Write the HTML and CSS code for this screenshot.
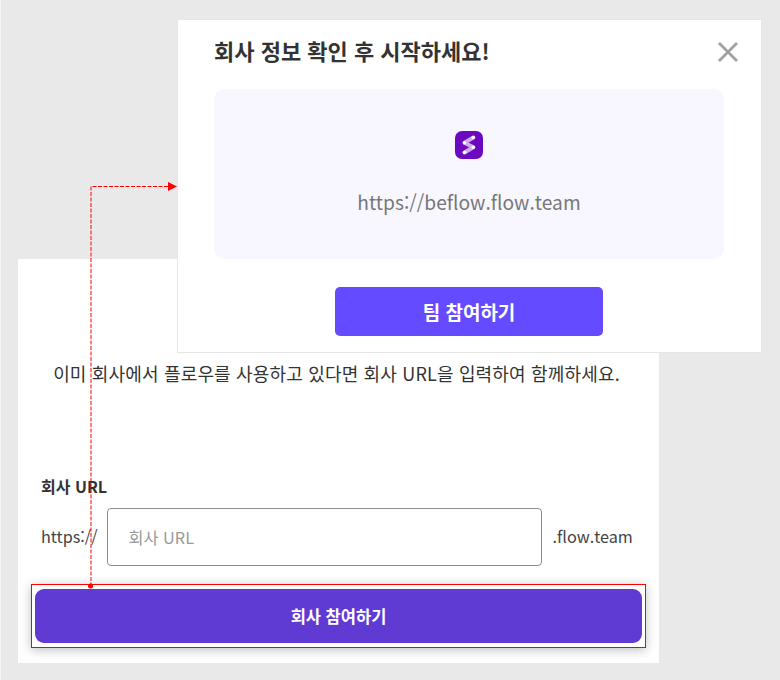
FILE: index.html
```html
<!DOCTYPE html>
<html lang="ko">
<head>
<meta charset="utf-8">
<title>회사 참여</title>
<link rel="stylesheet" href="styles.css">
</head>
<body>
<main class="card">
  <p class="desc">이미 회사에서 플로우를 사용하고 있다면 회사 URL을 입력하여 함께하세요.</p>
  <label class="label" for="url">회사 URL</label>
  <div class="url-row">
    <span class="affix">https://</span>
    <input class="input" id="url" placeholder="회사 URL">
    <span class="affix">.flow.team</span>
  </div>
  <div class="highlight"><button class="join">회사 참여하기</button></div>
</main>

<section class="modal">
  <header class="modal-head">
    <h2 class="title">회사 정보 확인 후 시작하세요!</h2>
    <svg class="close" width="22" height="22" viewBox="0 0 22 22"><path d="M2 2 20 20M20 2 2 20" stroke="#a0a0a0" stroke-width="2.8" fill="none"/></svg>
  </header>
  <div class="info">
    <svg class="logo" width="28" height="28" viewBox="0 0 28 28">
      <rect width="28" height="28" rx="7" fill="#6c08c0"/>
      <path d="M18.300 6.500 9.500 11.700 18.300 16.300 9.500 21.500" stroke="#cfaaec" stroke-width="4" stroke-linecap="round" stroke-linejoin="round" fill="none"/>
      <circle cx="18.300" cy="6.500" r="1.800" fill="#fff"/><circle cx="9.500" cy="11.700" r="1.800" fill="#fff"/><circle cx="18.300" cy="16.300" r="1.800" fill="#fff"/><circle cx="9.500" cy="21.500" r="1.800" fill="#fff"/>
    </svg>
    <p class="info-url">https://beflow.flow.team</p>
  </div>
  <button class="team">팀 참여하기</button>
</section>

<svg class="connector" width="180" height="410" viewBox="0 0 180 410">
  <path d="M91 401V1H170" stroke="#f00" stroke-width="1" stroke-dasharray="4 1.500" fill="none" transform="translate(0 .5)"/>
  <path d="M168 -3 177 1.500 168 6Z" fill="#f00"/>
  <circle cx="90.500" cy="401" r="2.500" fill="#f00"/>
</svg>
</body>
</html>
```
FILE: styles.css
```css
* { box-sizing: border-box; }
html, body { height: 100%; }
body {
  margin: 0;
  height: 680px;
  overflow: hidden;
  padding: 259px 0 0 17px;
  position: relative;
  background: #e9e9e9;
  border-left: 1px solid #f6f6f6;
  font-family: "Noto Sans CJK KR", "Noto Sans", sans-serif;
  color: #333;
}
.card {
  width: 641px;
  height: 404px;
  background: #fff;
  padding: 101px 13px 0;
  display: flex;
  flex-direction: column;
}
.desc {
  margin: 0 -8px 0 -12px;
  font-size: 18px;
  letter-spacing: .17px;
  line-height: 26px;
  text-align: center;
  white-space: nowrap;
  color: #333;
}
.label {
  margin: 90px 0 0 10px;
  font-size: 16px;
  line-height: 20px;
  font-weight: 700;
  color: #333;
}
.url-row {
  display: flex;
  align-items: center;
  margin: 12px 0 0 10px;
  gap: 10px;
}
.affix { font-size: 16.200px; line-height: 24px; color: #444; margin-top: -2px; }
.input {
  width: 435px;
  height: 58px;
  margin: 0 1px 0 -1px;
  border: 1px solid #8c8c8c;
  border-radius: 4px;
  padding: 0 21px;
  font: 16.300px "Noto Sans CJK KR", sans-serif;
  background: #fff;
  outline: none;
}
.input::placeholder { color: #999; opacity: 1; }
.highlight {
  width: 615px;
  height: 64px;
  margin-top: 18px;
  border: 1px solid #f00;
  padding: 4px 3px;
  box-shadow: 0 2px 10px rgba(0,0,0,.25);
  background: #fff;
}
.join {
  width: 100%;
  height: 54px;
  display: block;
  border: 0;
  border-radius: 9px;
  background: #5f3bd4;
  color: #fff;
  font: 700 16.500px "Noto Sans CJK KR", sans-serif;
}
.modal {
  position: absolute;
  left: 176px;
  top: 19px;
  width: 585px;
  height: 334px;
  background: #fff;
  border: 1px solid #e6e6e6;
  padding: 0 36px;
  display: flex;
  flex-direction: column;
}
.modal-head {
  display: flex;
  justify-content: space-between;
  align-items: center;
  height: 69px;
  padding-bottom: 10px;
}
.title { margin: 0; font-size: 22px; line-height: 30px; font-weight: 700; color: #333; }
.close { margin: 4px -14px 0 0; }
.info {
  height: 170px;
  width: 510px;
  border-radius: 10px;
  background: #f8f7ff;
  display: flex;
  flex-direction: column;
  align-items: center;
  padding-top: 42px;
}
.logo { display: block; }
.info-url { margin: 28px 0 0; font-size: 19.200px; line-height: 30px; color: #777; }
.team {
  align-self: flex-start;
  margin: 28px 0 0 121px;
  width: 268px;
  height: 49px;
  border: 0;
  border-radius: 5px;
  background: #654bff;
  color: #fff;
  font: 700 19px "Noto Sans CJK KR", sans-serif;
}
.connector { position: absolute; left: -1px; top: 185px; overflow: visible; }
```
